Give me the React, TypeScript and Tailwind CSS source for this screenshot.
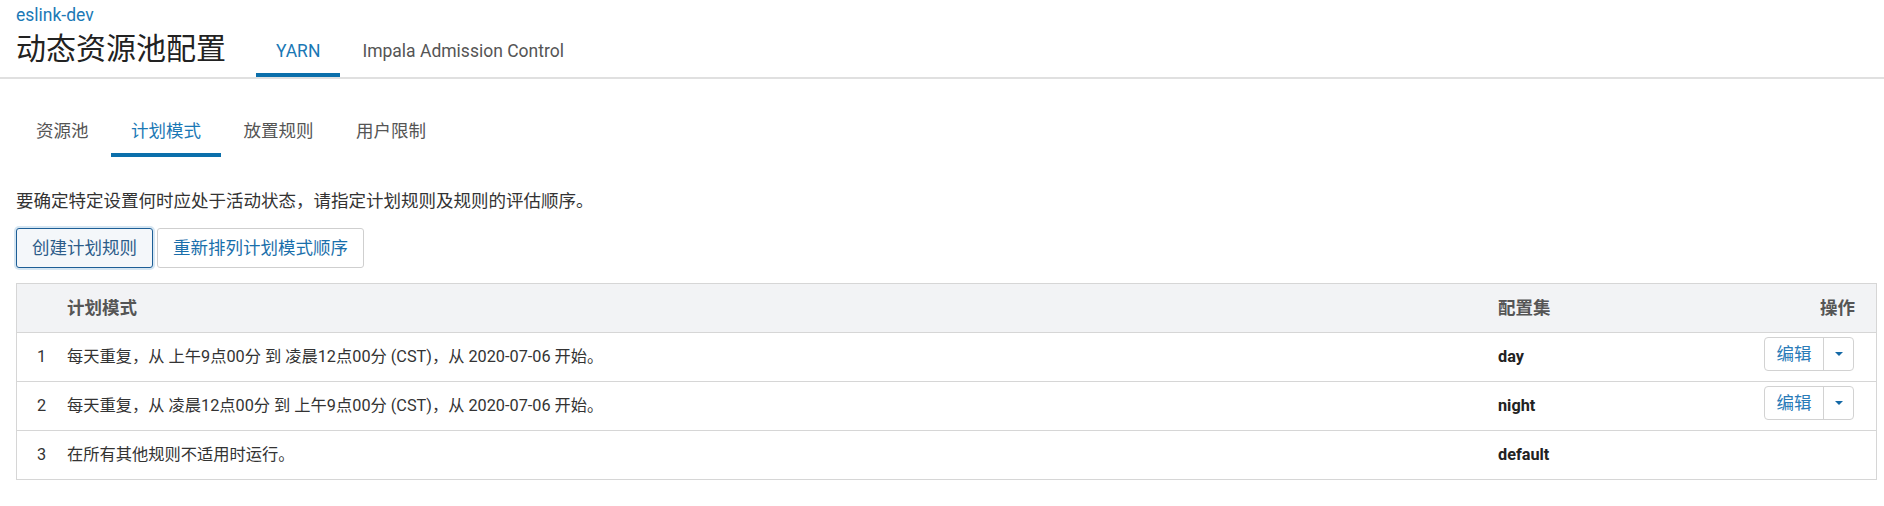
const rows = [
  { id: 1, text: '每天重复，从 上午9点00分 到 凌晨12点00分 (CST)，从 2020-07-06 开始。', set: 'day', edit: true },
  { id: 2, text: '每天重复，从 凌晨12点00分 到 上午9点00分 (CST)，从 2020-07-06 开始。', set: 'night', edit: true },
  { id: 3, text: '在所有其他规则不适用时运行。', set: 'default', edit: false },
]

const subTabs = ['资源池', '计划模式', '放置规则', '用户限制']

function EditButton() {
  return (
    <div className="mt-[4px] flex h-[34px] overflow-hidden rounded-[4px] border border-[#d2d2d2] bg-white">
      <button className="w-[58px] text-[17.5px] leading-[20px] text-[#2a7bb8]" type="button">
        编辑
      </button>
      <button className="flex w-[30px] items-center justify-center border-l border-[#d2d2d2]" type="button">
        <span className="block h-0 w-0 border-x-[4px] border-t-[4px] border-x-transparent border-t-[#1469a6]"></span>
      </button>
    </div>
  )
}

export default function App() {
  return (
    <div className="min-h-[506px] bg-white font-[Roboto,'Noto_Sans_CJK_SC',sans-serif] text-[#333]">
      <header className="border-b-2 border-[#e0e0e0] px-[16px] pt-[5px]">
        <a className="block text-[17.5px] leading-[20px] text-[#1b79b6]" href="#">
          eslink-dev
        </a>
        <div className="flex items-start">
          <h1 className="mt-[4px] text-[30px] leading-[40px] font-normal text-[#222]">动态资源池配置</h1>
          <nav className="ml-[30px] flex gap-[2px]">
            <div className="h-[52px] border-b-4 border-[#0b6fab] px-[20px] pt-[16px] text-[17.5px] leading-[20px] text-[#1a78b5]">
              YARN
            </div>
            <div className="h-[52px] border-b-4 border-transparent px-[20px] pt-[16px] text-[17.5px] leading-[20px] text-[#555]">
              Impala Admission Control
            </div>
          </nav>
        </div>
      </header>

      <div className="pr-[7px] pl-[16px]">
        <div className="mt-[22px] flex gap-[2.5px]">
          {subTabs.map((t) => (
            <div
              key={t}
              className={
                t === '计划模式'
                  ? 'h-[56px] border-b-4 border-[#0b6fab] px-[20px] pt-[20px] text-[17.5px] leading-[20px] text-[#1a78b5]'
                  : 'h-[56px] border-b-4 border-transparent px-[20px] pt-[20px] text-[17.5px] leading-[20px] text-[#555]'
              }
            >
              {t}
            </div>
          ))}
        </div>

        <p className="mt-[34px] text-[17.5px] leading-[20px] text-[#333]">
          要确定特定设置何时应处于活动状态，请指定计划规则及规则的评估顺序。
        </p>

        <div className="mt-[17px] flex gap-[4px]">
          <button
            className="h-[40px] rounded-[3px] border border-[#1d5e96] bg-[#f4f7fa] px-[15px] text-[17.5px] leading-[20px] text-[#2c5c89] shadow-[0_0_0_2px_#d6e6f2]"
            type="button"
          >
            创建计划规则
          </button>
          <button
            className="h-[40px] rounded-[3px] border border-[#cfcfcf] bg-white px-[15px] text-[17.5px] leading-[20px] text-[#1a6fab]"
            type="button"
          >
            重新排列计划模式顺序
          </button>
        </div>

        <div className="mt-[15px] border border-[#d6d6d6]">
          <div className="grid h-[49px] grid-cols-[50px_1fr_200px_178px] items-center border-b border-[#d6d6d6] bg-[#f2f3f5] text-[17.5px] leading-[20px] font-bold text-[#555]">
            <div></div>
            <div>计划模式</div>
            <div>配置集</div>
            <div className="pr-[21px] text-right">操作</div>
          </div>
          {rows.map((r) => (
            <div
              key={r.id}
              className={
                r.id === 3
                  ? 'grid h-[48px] grid-cols-[50px_1fr_200px_178px] items-center text-[16.25px] leading-[20px]'
                  : 'grid h-[49px] grid-cols-[50px_1fr_200px_178px] items-center border-b border-[#d6d6d6] text-[16.25px] leading-[20px]'
              }
            >
              <div className="pl-[20px]">{r.id}</div>
              <div>{r.text}</div>
              <div className="font-bold text-[#222]">{r.set}</div>
              <div className="flex h-full items-start justify-end pr-[22px]">{r.edit && <EditButton />}</div>
            </div>
          ))}
        </div>
      </div>
    </div>
  )
}
